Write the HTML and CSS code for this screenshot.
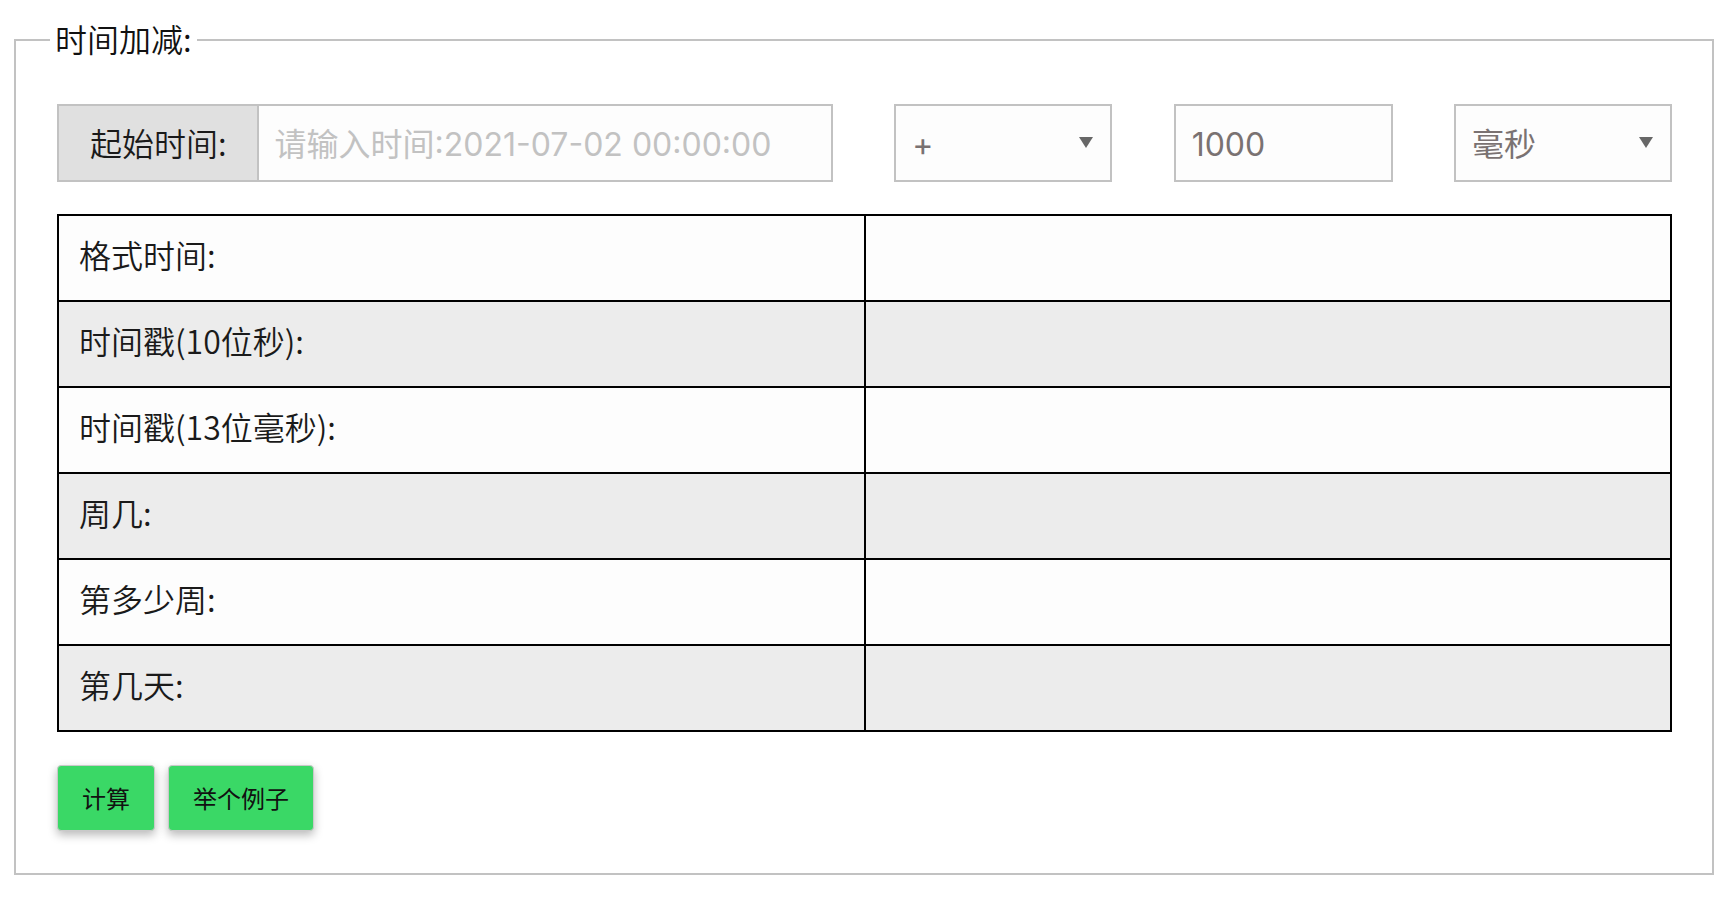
FILE: index.html
```html
<!DOCTYPE html>
<html lang="zh-CN">
<head>
<meta charset="utf-8">
<title>时间加减</title>
<link rel="stylesheet" href="styles.css">
</head>
<body>
<fieldset class="panel">
  <legend class="panel-title">时间加减:</legend>
  <div class="controls">
    <div class="input-group">
      <span class="addon">起始时间:</span>
      <input class="text-input" type="text" placeholder="请输入时间:2021-07-02 00:00:00">
    </div>
    <div class="select-box">
      <select class="select">
        <option>+</option>
        <option>-</option>
      </select>
    </div>
    <input class="num-input" type="text" value="1000">
    <div class="select-box">
      <select class="select">
        <option>毫秒</option>
        <option>秒</option>
        <option>分钟</option>
        <option>小时</option>
        <option>天</option>
      </select>
    </div>
  </div>
  <table class="result">
    <tbody>
      <tr><td class="key">格式时间:</td><td class="val"></td></tr>
      <tr><td class="key">时间戳(10位秒):</td><td class="val"></td></tr>
      <tr><td class="key">时间戳(13位毫秒):</td><td class="val"></td></tr>
      <tr><td class="key">周几:</td><td class="val"></td></tr>
      <tr><td class="key">第多少周:</td><td class="val"></td></tr>
      <tr><td class="key">第几天:</td><td class="val"></td></tr>
    </tbody>
  </table>
  <div class="actions">
    <button class="btn" type="button">计算</button>
    <button class="btn" type="button">举个例子</button>
  </div>
</fieldset>
</body>
</html>
```

FILE: styles.css
```css
* {
  box-sizing: border-box;
}

html, body {
  margin: 0;
  padding: 0;
  background: #ffffff;
}

body {
  font-family: "Noto Sans CJK SC", "Noto Sans", sans-serif;
  font-weight: 350;
  color: #1a1a1a;
}

.panel {
  width: 1700px;
  margin: 18px 0 0 14px;
  padding: 42px 40px 42px 41px;
  border: 2px solid #c2c2c2;
  min-width: 0;
}

.panel-title {
  margin-left: -7px;
  padding: 0 5px 4px;
  font-size: 32px;
  line-height: 40px;
  color: #111;
}

.controls {
  display: flex;
  justify-content: space-between;
  align-items: stretch;
  height: 78px;
}

.input-group {
  display: flex;
  width: 776px;
  border: 2px solid #c2c2c2;
}

.addon {
  display: flex;
  align-items: center;
  padding: 0 30px 2px 31px;
  background: #e0e0e0;
  border-right: 2px solid #c2c2c2;
  font-size: 32px;
  color: #1a1a1a;
  white-space: nowrap;
}

.text-input,
.num-input,
.select {
  font-family: "Inter", "Noto Sans CJK SC", sans-serif;
  font-weight: 400;
  font-size: 32px;
  background: #fdfdfd;
  outline: none;
}

.text-input {
  flex: 1;
  min-width: 0;
  border: none;
  padding: 3px 16px 0;
  color: #7a7272;
}

.text-input::placeholder {
  color: #c2c2c2;
}

.select-box {
  position: relative;
  width: 218px;
}

.select-box::after {
  content: "";
  position: absolute;
  right: 19px;
  top: 50%;
  margin-top: -6px;
  border-left: 7px solid transparent;
  border-right: 7px solid transparent;
  border-top: 11px solid #676767;
  pointer-events: none;
}

.select {
  appearance: none;
  -webkit-appearance: none;
  width: 100%;
  height: 100%;
  border: 2px solid #c2c2c2;
  border-radius: 0;
  padding: 3px 16px 0;
  color: #7a7272;
}

.num-input {
  width: 219px;
  border: 2px solid #c2c2c2;
  padding: 3px 16px 0;
  color: #7a7272;
}

.result {
  width: 100%;
  margin-top: 32px;
  border-collapse: separate;
  border-spacing: 0;
  border-top: 2px solid #000;
  border-left: 2px solid #000;
  table-layout: fixed;
}

.result td {
  height: 86px;
  padding: 0 20px 8px;
  border-right: 2px solid #000;
  border-bottom: 2px solid #000;
  font-size: 32px;
  color: #1a1a1a;
  vertical-align: middle;
  background: #fdfdfd;
}

.result tr:nth-child(even) td {
  background: #ececec;
}

.key {
  width: 50%;
}

.actions {
  display: flex;
  gap: 13px;
  margin-top: 33px;
}

.btn {
  height: 66px;
  padding: 0 24px 2px;
  font-family: "Noto Sans CJK SC", "Noto Sans", sans-serif;
  font-weight: 400;
  font-size: 24px;
  color: #111;
  background: #3ad866;
  border: 1px solid #c9c9c9;
  border-radius: 4px;
  box-shadow: 0 4px 10px rgba(0, 0, 0, 0.28);
  cursor: pointer;
}
```
